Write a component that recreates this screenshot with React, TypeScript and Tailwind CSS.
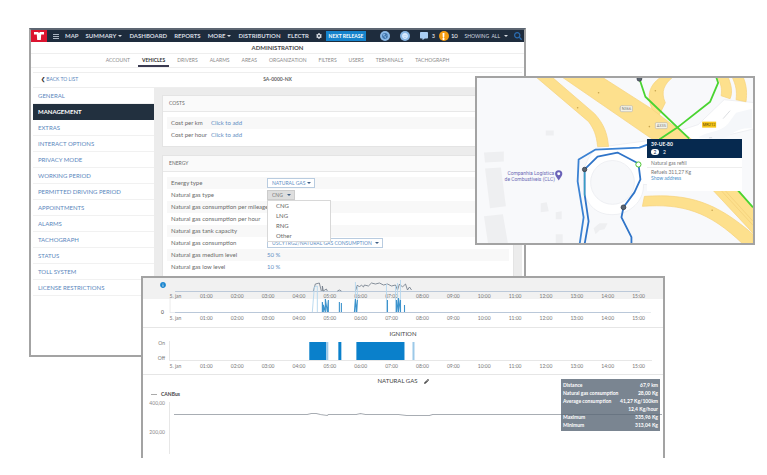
import React from "react";
import { FaCog, FaCommentAlt, FaExclamation, FaGlobeAmericas, FaInfoCircle, FaPencilAlt, FaSearch, FaSmile } from "react-icons/fa";

const NAV = [
  { label: "MAP" },
  { label: "SUMMARY", caret: true },
  { label: "DASHBOARD" },
  { label: "REPORTS" },
  { label: "MORE", caret: true },
  { label: "DISTRIBUTION" },
  { label: "ELECTR" },
];

const TABS = ["ACCOUNT", "VEHICLES", "DRIVERS", "ALARMS", "AREAS", "ORGANIZATION", "FILTERS", "USERS", "TERMINALS", "TACHOGRAPH"];

const SECTIONS = [
  "GENERAL",
  "MANAGEMENT",
  "EXTRAS",
  "INTERACT OPTIONS",
  "PRIVACY MODE",
  "WORKING PERIOD",
  "PERMITTED DRIVING PERIOD",
  "APPOINTMENTS",
  "ALARMS",
  "TACHOGRAPH",
  "STATUS",
  "TOLL SYSTEM",
  "LICENSE RESTRICTIONS",
];

const HOURS = ["5. jan", "01:00", "02:00", "03:00", "04:00", "05:00", "06:00", "07:00", "08:00", "09:00", "10:00", "11:00", "12:00", "13:00", "14:00", "15:00"];

const STATS = [
  ["Distance", "67,9 km"],
  ["Natural gas consumption", "28,00 Kg"],
  ["Average consumption", "41,27 Kg/100km"],
  ["", "12,4 Kg/hour"],
  ["Maximum", "335,96 Kg"],
  ["Minimum", "313,04 Kg"],
];

function Caret() {
  return <span className="inline-block border-x-2 border-t-2 border-x-transparent border-t-current" />;
}

function TopBar() {
  return (
    <header className="flex h-3 items-center bg-[#1e2c3d] text-white">
      <div className="flex h-3 w-4 shrink-0 items-center justify-center bg-[#dc1430]">
        <svg viewBox="0 0 12 10" className="h-2.5 w-3" fill="white" aria-hidden="true">
          <path d="M1 1h4l1 1 1-1h4v2.500H8.200L7.800 9H4.200L3.800 3.500H1z" />
        </svg>
      </div>
      <button aria-label="Menu" className="mx-1.5 flex w-1.5 flex-col gap-px">
        <span className="h-px bg-[#aab4c0]" />
        <span className="h-px bg-[#aab4c0]" />
        <span className="h-px bg-[#aab4c0]" />
      </button>
      <nav className="flex shrink-0 items-center gap-[7px] text-[6px] leading-3 font-bold text-[#d5dae0]">
        {NAV.map((n) => (
          <a key={n.label} href="#" className="flex items-center gap-0.5">
            {n.label}
            {n.caret && <Caret />}
          </a>
        ))}
        <FaCog />
      </nav>
      <button className="ml-1 h-2.5 w-10 shrink-0 bg-[#1583cc] text-[5px] leading-none font-bold text-white">NEXT RELEASE</button>
      <div className="ml-3.5 flex shrink-0 items-center gap-2.5 text-[5px] leading-3">
        <span className="flex size-2.5 items-center justify-center rounded-full bg-[#8ab8e6] text-[6px] text-[#e8f3ff]"><FaGlobeAmericas className="text-[#3f74ab]" /></span>
        <span className="flex size-2.5 items-center justify-center rounded-full bg-[#8ab8e6] text-[6px] text-[#d8eaff]"><FaSmile /></span>
        <span className="flex items-center gap-1"><FaCommentAlt className="text-[8px] text-[#a9cdf2]" />3</span>
      </div>
      <div className="ml-1 flex shrink-0 items-center gap-0.5 text-[6px] leading-3">
        <span className="flex size-2.5 items-center justify-center rounded-full bg-[#f39c12] text-[7px] text-white"><FaExclamation /></span>
        10
      </div>
      <button className="ml-auto flex items-center gap-1 text-[5px] leading-3 text-[#d5dae0]">SHOWING&nbsp; ALL <Caret /></button>
      <button aria-label="Search" className="ml-1 flex h-3 w-3 items-center justify-center text-[8px] text-[#2b6cb0]"><FaSearch /></button>
    </header>
  );
}

function PickList({ label, value, className }: { label: string; value: string; className: string }) {
  return (
    <span className="relative flex items-center">
      <select aria-label={label} defaultValue={value} className={"h-2.5 appearance-none border pl-1 text-[5px] leading-none " + className}>
        <option>{value}</option>
      </select>
      <span className="-ml-2 flex text-[#3f5f86]"><Caret /></span>
    </span>
  );
}

function Row({ label, wide, striped, children }: { label: string; wide?: boolean; striped?: boolean; children?: React.ReactNode }) {
  return (
    <div className={"flex h-3 items-center px-1 whitespace-nowrap " + (striped ? "bg-[#f8f8f8]" : "")}>
      <span className={"shrink-0 " + (wide ? "w-24" : "w-10")}>{label}</span>
      <span className="text-[#5f8fc4]">{children}</span>
    </div>
  );
}

function AdminWindow() {
  return (
    <section className="absolute top-[28px] right-[241px] left-[29px] h-[329px] overflow-hidden border-2 border-[#a3a3a3] border-t-[#5d6672] bg-white">
      <TopBar />
      <h1 className="flex h-3 items-center justify-center border-b border-[#eeeeee] text-[6px] leading-3 font-bold text-[#4a4a4a]">ADMINISTRATION</h1>
      <nav className="flex h-3.5 justify-center gap-3 border-b border-[#eeeeee] text-[5px] leading-3 text-[#8a8a8a]">
        {TABS.map((t) => (
          <a key={t} href="#" className={t === "VEHICLES" ? "-mx-1 border-b-2 border-[#3a3a50] px-1 font-bold text-[#333]" : ""}>
            {t}
          </a>
        ))}
      </nav>
      <div className="mx-0.5 mt-1 flex h-4 items-center justify-between border-y border-[#eeeeee] px-2 text-[5px]">
        <a href="#" className="flex-1 text-[#5b87bd]"><b className="text-[#333]">❮</b> BACK TO LIST</a>
        <span className="font-bold text-[#666]">SA-0000-NX</span>
        <span className="flex-1" />
      </div>
      <div className="mx-0.5 flex h-[270px]">
        <nav className="w-[121px] shrink-0 text-[6px]">
          {SECTIONS.map((s) => (
            <a
              key={s}
              href="#"
              className={
                "flex h-4 items-center border-b px-[5px] leading-none " +
                (s === "MANAGEMENT" ? "border-[#22303f] bg-[#22303f] font-bold text-white" : "border-[#f1f1f1] text-[#5b87bd]")
              }
            >
              {s}
            </a>
          ))}
        </nav>
        <div className="flex min-w-0 flex-1 flex-col gap-2 bg-[#ececec] px-2 pt-[7px] text-[6px] leading-3 text-[#6a6a6a]">
          <section className="border border-[#e4e4e4] bg-white">
            <h2 className="border-b border-[#e8e8e8] bg-[#fafafa] px-1.5 text-[5px] leading-[15px]">COSTS</h2>
            <div className="px-1 py-[5px]">
              <Row label="Cost per km" striped><a href="#">Click to add</a></Row>
              <Row label="Cost per hour"><a href="#">Click to add</a></Row>
            </div>
          </section>
          <section className="flex-1 border border-[#e4e4e4] bg-white">
            <h2 className="border-b border-[#e8e8e8] bg-[#fafafa] px-1.5 text-[5px] leading-[15px]">ENERGY</h2>
            <div className="px-1 py-[5px]">
              <Row label="Energy type" wide striped>
                <PickList label="Energy type" value="NATURAL GAS" className="w-12 border-[#b9cce0] bg-white" />
              </Row>
              <Row label="Natural gas type" wide>
                <span className="relative block">
                  <PickList label="Natural gas type" value="CNG" className="w-7 border-[#cccccc] bg-[#dedede] text-[#777]" />
                  <ul role="listbox" aria-label="Natural gas type options" className="absolute top-full left-0 z-10 w-16 border border-[#d8d8d8] bg-white pl-2 text-[6px] leading-[10px] text-[#666]">
                    {["CNG", "LNG", "RNG", "Other"].map((o) => (
                      <li key={o} role="option">{o}</li>
                    ))}
                  </ul>
                </span>
              </Row>
              <Row label="Natural gas consumption per mileage" wide striped />
              <Row label="Natural gas consumption per hour" wide />
              <Row label="Natural gas tank capacity" wide striped />
              <Row label="Natural gas consumption" wide>
                <PickList label="Natural gas consumption" value="USCYTRG2/NATURAL GAS CONSUMPTION" className="w-[116px] border-[#b9cce0] bg-white" />
              </Row>
              <Row label="Natural gas medium level" wide striped>50 %</Row>
              <Row label="Natural gas low level" wide>10 %</Row>
            </div>
          </section>
        </div>
      </div>
    </section>
  );
}

function MapDrawing() {
  return (
    <svg viewBox="0 0 277 166" preserveAspectRatio="xMidYMid slice" className="h-full w-full" aria-hidden="true">
      <rect width="277" height="166" fill="#f8f9fb" />
      <g fill="#eeeff1">
        <path d="M7 75l20-1v10l-19 1z" />
        <path d="M8 91l16-1 5 39-16 2z" />
        <path d="M7 139l19-2 5 29H11z" />
        <path d="M69 53h8v5h-8zM64 126l6-1 2 9-8 1zM79 135l6-1v8h-6zM79 157h7v9h-7zM117 151l6-5h8l-3 6-5 1-4 4z" />
      </g>
      <g fill="#ffffff" stroke="#e6e8ec" strokeWidth="0.6">
        <path d="M121 70C108 80 104 98 109 119c5 14 17 20 32 18 16-3 27-16 26-30l40 2 24-3 2-45 25-5 21-5V25L248 22l-26 25-50 16z" />
        <circle cx="136" cy="105" r="22" fill="#f7f8fa" />
      </g>
      <path d="M222 60c12-8 20-4 30-14l8-11 16-4v20c-14-2-22 8-31 11z" fill="#f5f7fa" />
      <path d="M247 41l7-8M233 60h3" stroke="#d3d6da" strokeWidth="0.8" />
      <g fill="#fde08d" stroke="#f6d27c" strokeWidth="0.7">
        <path d="M59-1h16l43 37c10 11 13 21 14 33h-11c-1-12-4-18-9-25z" />
        <path d="M185-1h12c-9 7-13 15-8 26l-8 16c-12-18-11-32 4-42z" />
        <path d="M241-1h11c3 8 5 15 2 22l-9-3c1-7 0-12-4-19zM256-1h11c4 9 4 17 3 25l-10-2c1-9 0-14-4-23z" />
        <path d="M85-1h40l50 32 42 32 45 49 16 20v25l-42-45-58-49z" />
        <path d="M168 119c45-3 72 6 109 38v10h-10c-34-33-61-41-101-38z" />
      </g>
      <path d="M244 112l33 36M248 112l29 32" stroke="#f3cf7a" strokeWidth="0.8" fill="none" />
      <g fill="none" strokeWidth="1.800" strokeLinejoin="round">
        <path d="M163 1l6 18 44 42M240-1l2 6-8 19-33 26-18 12M261 112l16 18" stroke="#49d431" />
        <path d="M103 167l4-27-6-36 1-22 17-10 44-2 8-3" stroke="#3b82d3" />
        <path d="M108 167l4-23-4-27V92l13-13 20-4 21 11 2 16-6 13-11 15-2 10 10 20v7" stroke="#2f74c8" />
        <path d="M108 92v27" stroke="#39a7c2" strokeWidth="1" />
      </g>
      <g fill="#5b6470" stroke="#333b45" strokeWidth="0.8">
        <circle cx="163" cy="1" r="2.400" />
        <circle cx="108" cy="92" r="2.200" />
        <circle cx="147" cy="130" r="2.400" />
      </g>
      <circle cx="162" cy="87" r="2.600" fill="#fff" stroke="#49c431" />
      <circle cx="146" cy="31" r="2.800" fill="#f1f1ee" stroke="#aaa" strokeWidth="0.5" />
      <g fill="#c7a44f">
        <circle cx="101" cy="30" r="0.8" />
        <circle cx="122" cy="15" r="0.8" />
        <circle cx="179" cy="13" r="0.8" />
        <circle cx="173" cy="49" r="0.8" />
        <circle cx="236" cy="133" r="0.8" />
      </g>
      <path d="M82 103c-2.700-3.500-3.600-4.900-3.600-6.600a3.600 3.600 0 0 1 7.200 0c0 1.700-.9 3.100-3.600 6.600z" fill="#6a62b8" />
      <circle cx="82" cy="96.400" r="1.500" fill="#fff" />
      <g fontFamily="Roboto, sans-serif" fontSize="5" textAnchor="middle">
        <g fill="#6c6bb5">
          <text x="54" y="98">Companhia Logística</text>
          <text x="53" y="104">de Combustíveis (CLC)</text>
        </g>
        <g fontSize="4" fill="#777">
          <rect x="144" y="28" width="12" height="6" rx="1" fill="#f4f2e6" stroke="#aaa" strokeWidth="0.5" />
          <text x="150" y="32.500">N366</text>
          <rect x="179" y="45" width="12" height="6" rx="1" fill="#f4f2e6" stroke="#aaa" strokeWidth="0.5" />
          <text x="185" y="49.500">A335</text>
          <rect x="226" y="44" width="14" height="6" fill="#f6c416" />
          <text x="233" y="48.500" fill="#5c4a08">MR212</text>
        </g>
      </g>
    </svg>
  );
}

function MapWindow() {
  return (
    <section className="absolute top-[76px] right-[12px] left-[475px] h-[169px] overflow-hidden border-2 border-[#a3a3a3]">
      <MapDrawing />
      <article className="absolute top-[61px] right-[11px] w-[95px] bg-white text-[5px] leading-[6px] text-[#777]">
        <header className="h-[19px] bg-[#06294f] px-1 pt-0.5 text-white">
          <b className="block">39-UE-80</b>
          <span className="mt-0.5 flex items-center gap-1"><span className="flex h-1.5 w-2 items-center justify-center rounded-full bg-white text-[#06294f]">2</span>2</span>
        </header>
        <p className="border-b border-[#eeeeee] px-1 pt-0.5 pb-px">Natural gas refill</p>
        <p className="px-1 pt-px">Refuels 311,27 Kg</p>
        <a href="#" className="block px-1 pb-2.5 text-[#4b8fcb]">Show address</a>
      </article>
    </section>
  );
}

function Hours() {
  return (
    <div className="grid h-1.5 grid-cols-16 pr-[9px] pl-[17px] text-center text-[5px] leading-[6px] text-[#777]">
      {HOURS.map((h) => (
        <span key={h}>{h}</span>
      ))}
    </div>
  );
}

function ChartWindow() {
  return (
    <section className="absolute top-[276px] right-[102px] left-[141px] h-[182px] overflow-hidden border-x-2 border-t-2 border-[#a3a3a3] bg-white text-[#444]">
      <div className="relative border-b border-[#e6e6e6]">
        <div className="flex h-[21px] flex-col justify-between bg-[#f1f1f1]">
          <FaInfoCircle className="mt-1 ml-[17px] text-[6px] text-[#1b86cf]" />
          <Hours />
        </div>
        <div className="flex h-7 flex-col justify-between pb-1.5">
          <span className="mt-[11px] ml-[18px] text-[5px] leading-none">0</span>
          <Hours />
        </div>
        <svg viewBox="0 0 519 36" preserveAspectRatio="none" className="absolute inset-x-0 top-0 h-9 w-full" fill="none" aria-hidden="true">
          <path d="M27 20v15" stroke="#e3e3e3" strokeWidth="0.7" />
          <path d="M27 34.500h480" stroke="#dde2e8" strokeWidth="0.7" />
          <path d="M32 13.500h464M32 34.500h464" stroke="#aebfd3" strokeWidth="0.8" />
          <path d="M170 13l2-7 4-1 2 8M179 13v-5l1 5 3-2 1 2M194 13l2-1 2 1M212 13l2-6 2 2 2-2 2 2 1-2 4 1 3-3 4 1 4-1 4 2 4-1 4 2 4-1 2 5 2-6 3 3 3-3 2 6 2-3 2 3" stroke="#6b7684" strokeWidth="0.8" />
          <path d="M169 34l2-25 3-1M174 8v26M212 34V4M214 34V8M243 34V6M252 34V8M254 34V5M257 30V2" stroke="#b4d7ee" strokeWidth="0.9" />
          <path d="M179 34V24l1 10v-7l2 7V21l2 13 1-12v12M196 34V24M198 34V25M211 34l1-13 1 13 1-12M244 34V22M253 34V22l2 12V20l2 14V22M261 34v-7" stroke="#3c93cc" strokeWidth="1.100" />
        </svg>
      </div>
      <div className="border-b border-[#e6e6e6]">
        <h2 className="pt-0.5 text-center text-[6px] leading-2">IGNITION</h2>
        <div className="mt-[3px] flex h-5 items-stretch">
          <div className="flex w-[26px] flex-col justify-between pr-1 text-right text-[5px] leading-none text-[#777]">
            <span>On</span>
            <span>Off</span>
          </div>
          <svg viewBox="0 0 493 20" preserveAspectRatio="none" className="h-full min-w-0 flex-1" aria-label="Ignition periods">
            <path d="M.5 0v19.500H482" stroke="#dcdcdc" fill="none" strokeWidth="0.7" />
            <g fill="#0a80cb">
              <rect x="140" y="1" width="17" height="18" />
              <rect x="169" y="1" width="3" height="18" />
              <rect x="187" y="1" width="48" height="18" />
            </g>
            <g fill="#9cc9e8">
              <rect x="157" y="1" width="2" height="18" />
              <rect x="243" y="1" width="2" height="18" />
            </g>
          </svg>
        </div>
        <div className="pt-0.5 pb-[5px]"><Hours /></div>
      </div>
      <div className="relative">
        <h2 className="flex items-center justify-center gap-1.5 pt-0.5 text-[6px] leading-2">NATURAL GAS <FaPencilAlt className="text-[5px]" /></h2>
        <div className="mt-[5px] ml-2 flex items-center gap-1 text-[5px] leading-2"><span className="h-px w-1.5 bg-[#aaa]" /><b>CANBus</b></div>
        <div className="flex h-14">
          <div className="flex w-[26px] flex-col gap-[23px] pt-0.5 pr-1 text-right text-[5px] leading-[6px] text-[#888]">
            <span>400,00</span>
            <span>200,00</span>
          </div>
          <svg viewBox="0 0 493 56" preserveAspectRatio="none" className="h-full min-w-0 flex-1" fill="none" aria-label="Natural gas level">
            <path d="M.5 4v52" stroke="#dcdcdc" strokeWidth="0.7" />
            <path d="M5 16.500h133l4-1h5l4 1 7 1 1-1h28l4-1 5 1h33l8 1h23l3-1h229" stroke="#a8adb3" strokeWidth="1" />
          </svg>
        </div>
        <dl className="absolute top-1 right-[3px] w-[99px] bg-[#596675]/80 px-0.5 py-0.5 text-[5px] leading-2 font-bold text-white">
          {STATS.map(([k, v]) => (
            <div key={v} className="flex justify-between whitespace-nowrap">
              <dt>{k}</dt>
              <dd>{v}</dd>
            </div>
          ))}
        </dl>
      </div>
    </section>
  );
}

export default function App() {
  return (
    <main className="relative min-h-screen min-w-[767px] bg-white font-['Lato',sans-serif]">
      <AdminWindow />
      <MapWindow />
      <ChartWindow />
    </main>
  );
}
